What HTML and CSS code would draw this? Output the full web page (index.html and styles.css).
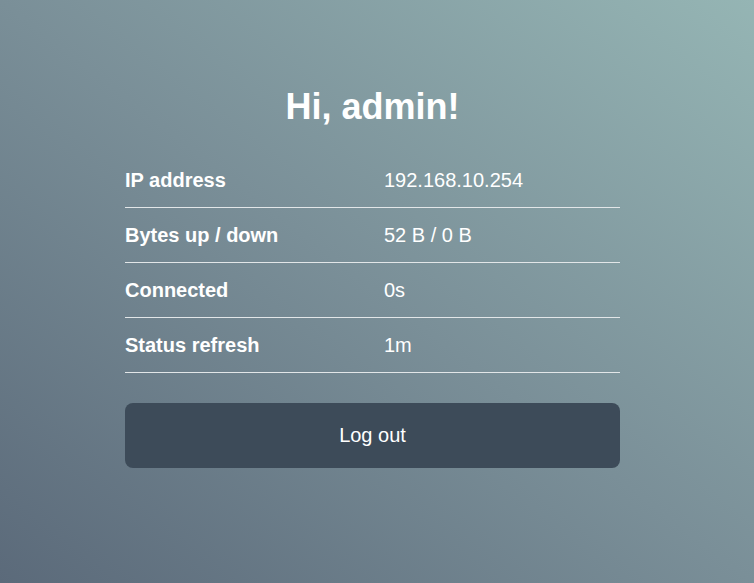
FILE: index.html
```html
<!DOCTYPE html>
<html lang="en">
<head>
    <meta charset="UTF-8">
    <meta name="viewport" content="width=device-width, initial-scale=1.0">
    <title>Status</title>
    <link rel="stylesheet" href="styles.css">
</head>
<body>
    <div class="container">
        <h1>Hi, admin!</h1>

        <!-- Session details -->
        <div class="info">
            <div class="row">
                <span class="label">IP address</span>
                <span class="value">192.168.10.254</span>
            </div>
            <div class="row">
                <span class="label">Bytes up / down</span>
                <span class="value">52 B / 0 B</span>
            </div>
            <div class="row">
                <span class="label">Connected</span>
                <span class="value">0s</span>
            </div>
            <div class="row">
                <span class="label">Status refresh</span>
                <span class="value">1m</span>
            </div>
        </div>

        <button class="btn">Log out</button>
    </div>
</body>
</html>
```

FILE: styles.css
```css
html, body {
    height: 100%;
}
body {
    margin: 0;
    font-family: "Liberation Sans", Arial, sans-serif;
    color: white;
    background: linear-gradient(to top right, #5b6a7a 0%, #7a8f98 50%, #95b5b4 100%);
}
.container {
    width: 495px;
    margin-left: 125px;
    padding-top: 86px;
}
h1 {
    margin: 0 0 25px;
    font-size: 36px;
    line-height: 42px;
    text-align: center;
}
.row {
    display: grid;
    grid-template-columns: 259px 1fr;
    padding: 16px 0;
    font-size: 20px;
    line-height: 22px;
    border-bottom: 1px solid #e2e6e8;
}
.label {
    font-weight: bold;
}
.btn {
    display: block;
    width: 100%;
    height: 65px;
    margin-top: 30px;
    background: #3d4b59;
    color: white;
    border: none;
    border-radius: 8px;
    font-family: inherit;
    font-size: 20px;
    cursor: pointer;
}
```
